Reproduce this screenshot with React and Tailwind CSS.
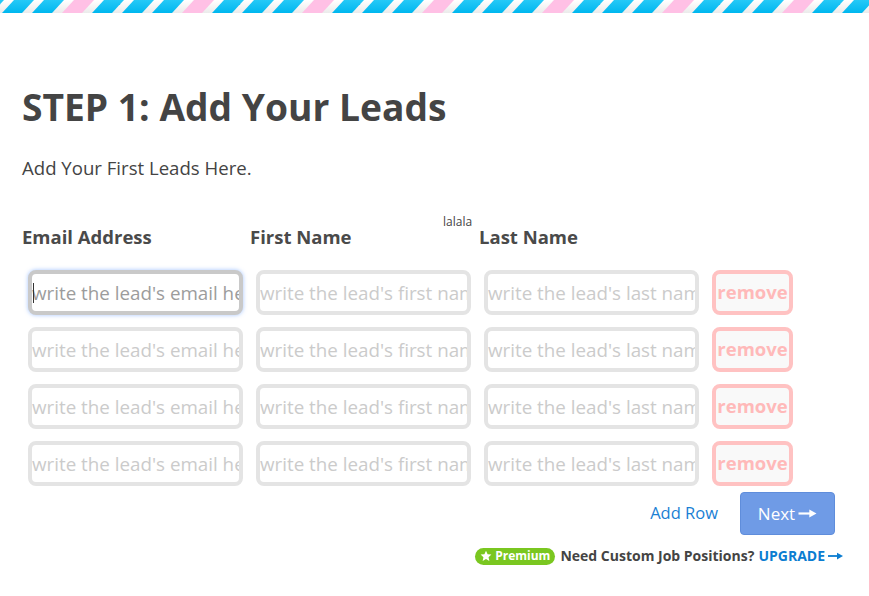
import React from 'react';

const rows = [0, 1, 2, 3];

function StripeBar() {
  // diagonal air-mail stripes: blue, blue, pink, blue repeating every 120px
  const stripes = [-1, 0, 1, 2, 3, 4];
  return (
    <svg className="block w-full h-[13px]" height="13">
      <defs>
        <linearGradient id="blueg" x1="0" y1="0" x2="0" y2="1">
          <stop offset="0" stopColor="#25c9f7" />
          <stop offset="1" stopColor="#00b7ef" />
        </linearGradient>
        <linearGradient id="whiteg" x1="0" y1="0" x2="0" y2="1">
          <stop offset="0" stopColor="#ffffff" />
          <stop offset="1" stopColor="#ebebeb" />
        </linearGradient>
        <pattern id="air" width="120" height="13" patternUnits="userSpaceOnUse">
          <rect width="120" height="13" fill="url(#whiteg)" />
          {stripes.map((k) => {
            const x = 2 + 30 * k;
            const pink = ((k % 4) + 4) % 4 === 2;
            return (
              <polygon
                key={k}
                points={`${x},13 ${x + 20},13 ${x + 32},0 ${x + 12},0`}
                fill={pink ? '#ffc0e5' : 'url(#blueg)'}
              />
            );
          })}
        </pattern>
      </defs>
      <rect width="100%" height="13" fill="url(#air)" />
    </svg>
  );
}

function Arrow({ className }) {
  return (
    <svg viewBox="0 0 20 10" className={className} fill="currentColor">
      <rect x="0" y="3.8" width="13" height="2.4" />
      <polygon points="12,0.5 20,5 12,9.5" />
    </svg>
  );
}

function Field({ placeholder, focused }) {
  return (
    <div
      className={
        'relative w-[215px] h-[45px] rounded-[8px] border-4 bg-white ' +
        (focused
          ? 'border-[#c9c9c9] shadow-[0_0_4px_rgba(90,150,255,0.55)]'
          : 'border-[#e4e4e4]')
      }
    >
      <input
        className={
          'w-full h-full bg-transparent outline-none pl-0 text-[18.8px] text-[#444] ' +
          (focused ? 'placeholder:text-[#9c9c9c]' : 'placeholder:text-[#cbcbcb]')
        }
        placeholder={placeholder}
      />
      {focused && <span className="absolute left-[1px] top-[9px] w-[1px] h-[20px] bg-[#333]" />}
    </div>
  );
}

export default function App() {
  return (
    <div className="min-h-screen bg-white text-[#444] font-['Open_Sans',sans-serif]">
      <StripeBar />

      <div className="pl-[22px] pt-[72px]">
        <h1 className="text-[37.2px] font-bold leading-[44px] text-[#444]">STEP 1: Add Your Leads</h1>
        <p className="mt-[25px] text-[18.6px] leading-[27px] text-[#444]">Add Your First Leads Here.</p>

        {/* column headings */}
        <div className="mt-[33px] flex items-start">
          <div className="w-[228px] mt-[9px] text-[18.5px] leading-[28px] font-bold text-[#4a4a4a]">Email Address</div>
          <div className="w-[193px] mt-[9px] text-[18.5px] leading-[28px] font-bold text-[#4a4a4a]">First Name</div>
          <div className="w-[36px] text-[12px] leading-[16px] text-[#444]">lalala</div>
          <div className="mt-[9px] text-[18.5px] leading-[28px] font-bold text-[#4a4a4a]">Last Name</div>
        </div>

        {/* lead rows */}
        <div className="mt-[19px] ml-[6px] flex flex-col gap-[12px]">
          {rows.map((r) => (
            <div key={r} className="flex gap-[13px]">
              <Field placeholder="write the lead's email here" focused={r === 0} />
              <Field placeholder="write the lead's first name" />
              <Field placeholder="write the lead's last name" />
              <button className="w-[81px] h-[45px] rounded-[8px] border-4 border-[#ffc2c2] bg-[#f9f9f9] text-[18.5px] font-bold text-[#ffb9b9] leading-none flex items-center justify-center">
                remove
              </button>
            </div>
          ))}
        </div>
      </div>

      <div className="mt-[6px] pr-[34px] flex justify-end items-center gap-[22px]">
        <span className="text-[16.5px] text-[#1a7fd4]">Add Row</span>
        <button className="w-[95px] h-[43px] rounded-[4px] border border-[#5f8ddb] bg-[#6f9be6] text-white text-[17px] flex items-center justify-center gap-[3px]">
          Next <Arrow className="w-[19px] h-[9px]" />
        </button>
      </div>

      <div className="mt-[12px] pr-[26px] flex justify-end items-center text-[14px] font-bold leading-[18px]">
        <span className="h-[17px] rounded-full bg-[#7ac720] px-[5px] flex items-center gap-[3px] text-white text-[12px]">
          <svg viewBox="0 0 24 24" className="w-[12px] h-[12px]" fill="currentColor">
            <polygon points="12,1.5 15.2,8.4 22.8,9.2 17.1,14.3 18.7,21.8 12,18 5.3,21.8 6.9,14.3 1.2,9.2 8.8,8.4" />
          </svg>
          Premium
        </span>
        <span className="ml-[5px] text-[#444]">Need Custom Job Positions?</span>
        <span className="ml-[4px] text-[#0b7dd1] flex items-center gap-[3px]">
          UPGRADE <Arrow className="w-[15px] h-[8px]" />
        </span>
      </div>
    </div>
  );
}
